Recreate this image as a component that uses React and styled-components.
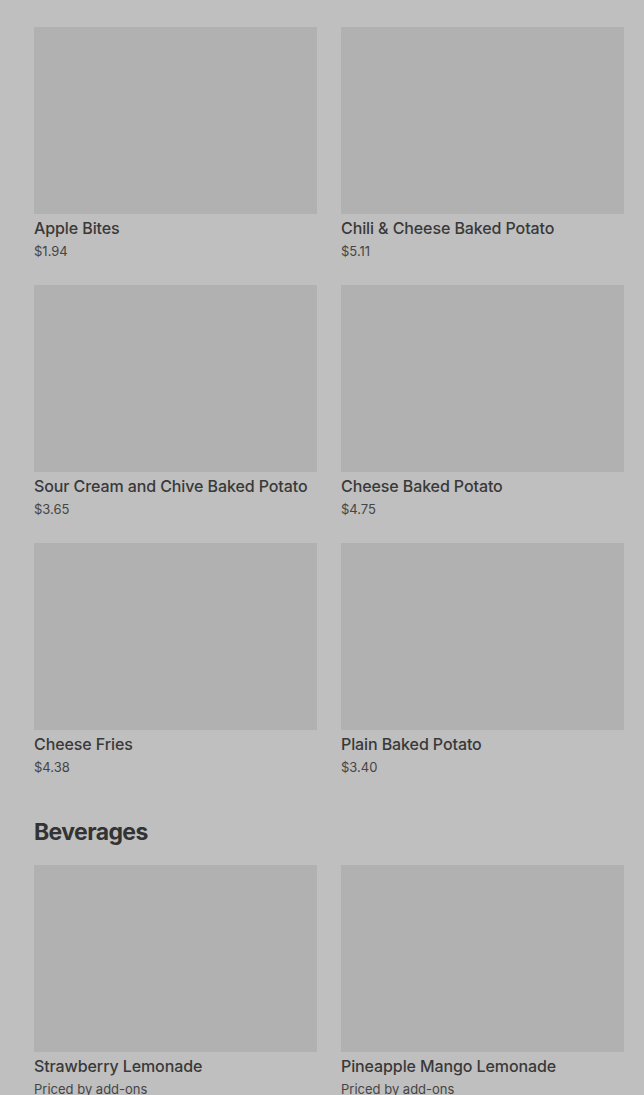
import styled, { createGlobalStyle } from "styled-components";

const GlobalStyle = createGlobalStyle`
  body {
    margin: 0;
    background: #bfbfbf;
    font-family: Inter, "Liberation Sans", sans-serif;
    color: #393939;
  }
`;

const Page = styled.div`
  padding: 27px 20px 0 34px;
`;

const Grid = styled.div`
  display: grid;
  grid-template-columns: 1fr 1fr;
  column-gap: 24px;
  row-gap: 24px;
`;

const Card = styled.div`
  display: flex;
  flex-direction: column;
`;

const Thumb = styled.div`
  height: 187px;
  background: #b1b1b1;
`;

const Name = styled.div`
  margin-top: 4px;
  font-size: 16px;
  line-height: 20px;
  font-weight: 500;
  letter-spacing: -0.1px;
  white-space: nowrap;
`;

const Price = styled.div`
  margin-top: 3px;
  font-size: 13px;
  line-height: 20px;
  color: #454545;
`;

const Heading = styled.h2`
  margin: 39px 0 17px;
  font-size: 23px;
  line-height: 32px;
  font-weight: 700;
  letter-spacing: -0.6px;
  color: #333;
`;

const sides = [
  ["Apple Bites", "$1.94"],
  ["Chili & Cheese Baked Potato", "$5.11"],
  ["Sour Cream and Chive Baked Potato", "$3.65"],
  ["Cheese Baked Potato", "$4.75"],
  ["Cheese Fries", "$4.38"],
  ["Plain Baked Potato", "$3.40"],
];

const beverages = [
  ["Strawberry Lemonade", "Priced by add-ons"],
  ["Pineapple Mango Lemonade", "Priced by add-ons"],
];

function Item({ name, price }) {
  return (
    <Card>
      <Thumb />
      <Name>{name}</Name>
      <Price>{price}</Price>
    </Card>
  );
}

export default function App() {
  return (
    <>
      <GlobalStyle />
      <Page>
        <Grid>
          {sides.map(([n, p]) => (
            <Item key={n} name={n} price={p} />
          ))}
        </Grid>
        <Heading>Beverages</Heading>
        <Grid>
          {beverages.map(([n, p]) => (
            <Item key={n} name={n} price={p} />
          ))}
        </Grid>
      </Page>
    </>
  );
}
